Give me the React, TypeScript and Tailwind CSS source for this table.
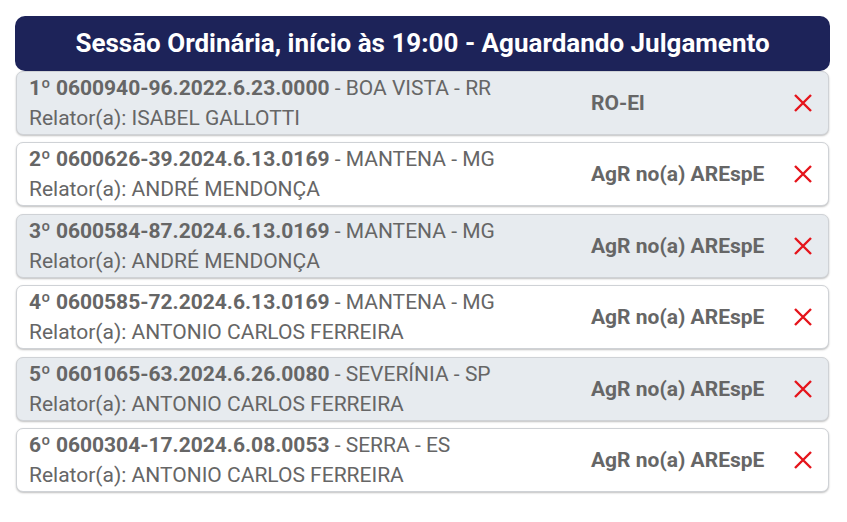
const processos = [
  { n: '1º 0600940-96.2022.6.23.0000', local: 'BOA VISTA - RR', relator: 'ISABEL GALLOTTI', classe: 'RO-El' },
  { n: '2º 0600626-39.2024.6.13.0169', local: 'MANTENA - MG', relator: 'ANDRÉ MENDONÇA', classe: 'AgR no(a) AREspE' },
  { n: '3º 0600584-87.2024.6.13.0169', local: 'MANTENA - MG', relator: 'ANDRÉ MENDONÇA', classe: 'AgR no(a) AREspE' },
  { n: '4º 0600585-72.2024.6.13.0169', local: 'MANTENA - MG', relator: 'ANTONIO CARLOS FERREIRA', classe: 'AgR no(a) AREspE' },
  { n: '5º 0601065-63.2024.6.26.0080', local: 'SEVERÍNIA - SP', relator: 'ANTONIO CARLOS FERREIRA', classe: 'AgR no(a) AREspE' },
  { n: '6º 0600304-17.2024.6.08.0053', local: 'SERRA - ES', relator: 'ANTONIO CARLOS FERREIRA', classe: 'AgR no(a) AREspE' },
];

const CloseIcon = () => (
  <svg width="20" height="20" viewBox="0 0 20 20" className="shrink-0">
    <path d="M2 2 L18 18 M18 2 L2 18" stroke="#e5141b" strokeWidth="2.4" />
  </svg>
);

export default function App() {
  return (
    <div className="min-h-[522px] bg-white pt-4 font-['Roboto',sans-serif]">
      <div className="ml-[15px] w-[815px]">
        {/* Cabeçalho da sessão */}
        <div className="flex h-[55px] items-center justify-center rounded-[10px] bg-[#1d2359] text-[26px] font-bold text-white">
          Sessão Ordinária, início às 19:00 - Aguardando Julgamento
        </div>

        {/* Lista de processos */}
        <div className="mx-[1px] flex flex-col gap-[7.4px]">
          {processos.map((p, i) => (
            <div
              key={p.n}
              className={`flex h-[64px] items-center rounded-[7px] border border-[#cfd2d6] pl-3 pr-[15px] text-[21px] leading-[30px] text-[#666] shadow-[0_1px_2px_rgba(0,0,0,0.25)] ${
                i % 2 === 0 ? 'bg-[#e7ebef]' : 'bg-white'
              }`}
            >
              <div className="flex-1 whitespace-nowrap">
                <div>
                  <span className="font-bold">{p.n}</span> - {p.local}
                </div>
                <div>Relator(a): {p.relator}</div>
              </div>
              <div className="w-[202px] shrink-0 whitespace-nowrap font-bold">{p.classe}</div>
              <CloseIcon />
            </div>
          ))}
        </div>
      </div>
    </div>
  );
}
